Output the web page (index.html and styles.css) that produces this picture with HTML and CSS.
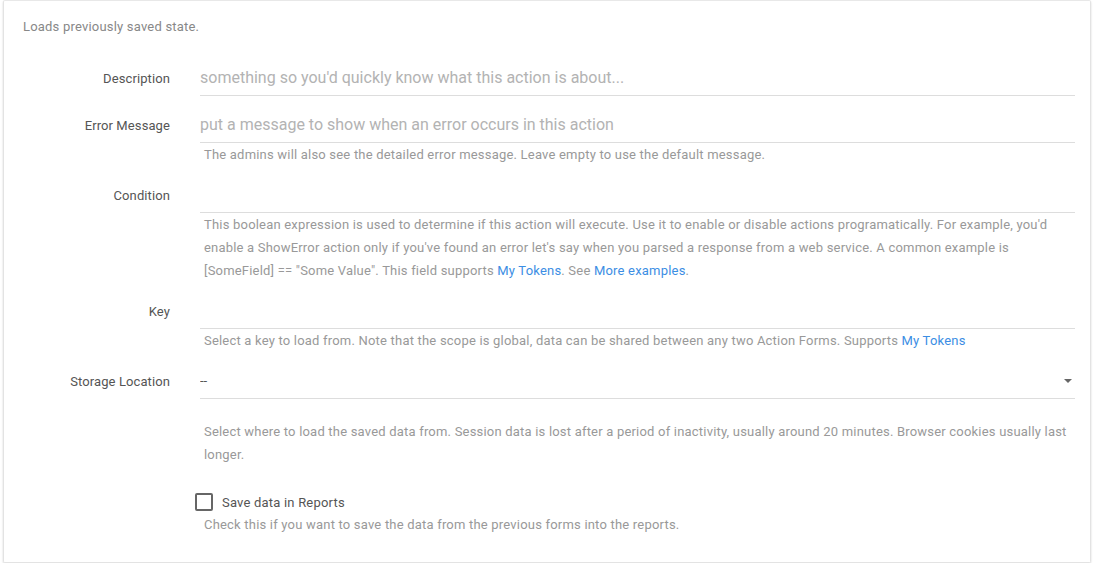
FILE: index.html
```html
<!DOCTYPE html>
<html>
<head>
<meta charset="utf-8">
<link rel="stylesheet" href="styles.css">
</head>
<body>
<div class="card">
  <p class="intro">Loads previously saved state.</p>
  <div class="row">
    <label class="label">Description</label>
    <div class="field">
      <div class="input placeholder">something so you'd quickly know what this action is about...</div>
    </div>
  </div>
  <div class="row">
    <label class="label">Error Message</label>
    <div class="field">
      <div class="input placeholder">put a message to show when an error occurs in this action</div>
      <div class="help">The admins will also see the detailed error message. Leave empty to use the default message.</div>
    </div>
  </div>
  <div class="row">
    <label class="label">Condition</label>
    <div class="field">
      <div class="input"></div>
      <div class="help">This boolean expression is used to determine if this action will execute. Use it to enable or disable actions programatically. For example, you'd enable a ShowError action only if you've found an error let's say when you parsed a response from a web service. A common example is [SomeField] == "Some Value". This field supports <a class="link">My Tokens</a>. See <a class="link">More examples</a>.</div>
    </div>
  </div>
  <div class="row">
    <label class="label">Key</label>
    <div class="field">
      <div class="input"></div>
      <div class="help">Select a key to load from. Note that the scope is global, data can be shared between any two Action Forms. Supports <a class="link">My Tokens</a></div>
    </div>
  </div>
  <div class="row">
    <label class="label">Storage Location</label>
    <div class="field">
      <div class="input select"><span class="value">--</span><span class="caret"></span></div>
      <div class="help spaced">Select where to load the saved data from. Session data is lost after a period of inactivity, usually around 20 minutes. Browser cookies usually last longer.</div>
    </div>
  </div>
  <div class="row last">
    <div class="label"></div>
    <div class="field">
      <div class="check"><span class="box"></span><span class="check-label">Save data in Reports</span></div>
      <div class="help tight">Check this if you want to save the data from the previous forms into the reports.</div>
    </div>
  </div>
</div>
</body>
</html>
```

FILE: styles.css
```css
html, body {
  margin: 0;
  padding: 0;
  background: #fff;
  font-family: Roboto, "Liberation Sans", Arial, sans-serif;
}
.card {
  margin-left: 3px;
  height: 561px;
  border: 1px solid #e3e3e3;
  border-top-color: #e8e8e8;
  border-radius: 2px;
  box-shadow: 0 1px 2px rgba(0,0,0,0.18);
  box-sizing: content-box;
  padding: 0 15px 0 0;
  width: 1071px;
}
.intro {
  margin: 0;
  padding: 18px 0 0 19px;
  font-size: 13px;
  letter-spacing: 0.2px;
  line-height: 16px;
  color: #888;
  height: 42px;
}
.row {
  display: grid;
  grid-template-columns: 166px 1fr;
  column-gap: 30px;
  margin-bottom: 12px;
}
.label {
  text-align: right;
  font-size: 13px;
  letter-spacing: 0.1px;
  color: #555;
  line-height: 34px;
  height: 34px;
  padding-top: 1px;
  box-sizing: border-box;
}
.input {
  height: 34px;
  border-bottom: 1px solid #ddd;
  font-size: 16px;
  line-height: 34px;
  color: #555;
  white-space: nowrap;
  overflow: hidden;
}
.placeholder {
  color: #b3b3b3;
}
.select {
  display: flex;
  align-items: center;
  justify-content: space-between;
  font-size: 13px;
}
.caret {
  width: 0;
  height: 0;
  border-left: 4px solid transparent;
  border-right: 4px solid transparent;
  border-top: 4px solid #666;
  margin-right: 3px;
}
.help {
  padding-left: 4px;
  font-size: 13px;
  letter-spacing: 0.2px;
  line-height: 23px;
  color: #999;
}
.help.spaced {
  margin-top: 21px;
}
.help.tight {
  margin-top: 2px;
}
.link {
  color: #3c8ee4;
  text-decoration: none;
}
.check {
  display: flex;
  align-items: center;
  margin-top: 15px;
  margin-left: -5px;
  height: 18px;
}
.box {
  width: 14px;
  height: 14px;
  border: 2px solid #666;
  border-radius: 2px;
}
.check-label {
  margin-left: 9px;
  font-size: 13px;
  letter-spacing: 0.2px;
  color: #555;
}
.last .label {
  height: auto;
}
```
